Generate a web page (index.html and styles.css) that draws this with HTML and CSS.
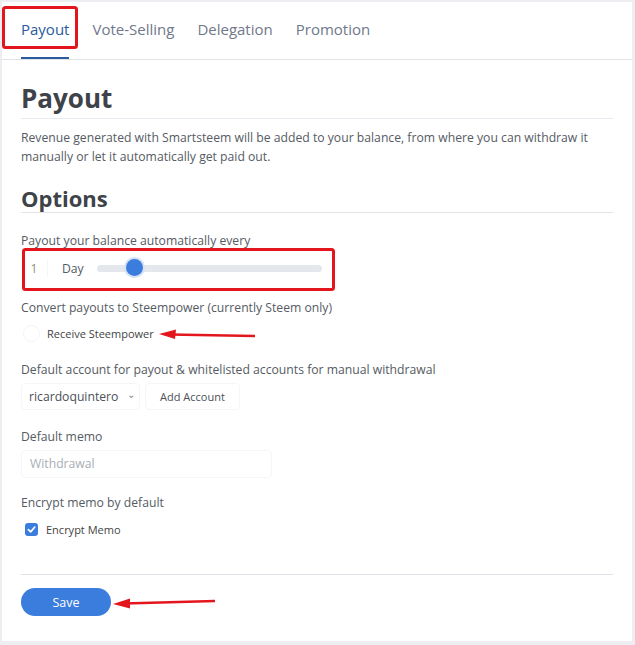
FILE: index.html
```html
<!DOCTYPE html>
<html>
  <head>
    <title>Smartsteem Settings</title>
    <meta charset="utf-8">
    <meta name="viewport" content="width=device-width, initial-scale=1">
    <link rel="stylesheet" href="styles.css">
  </head>
  <body>
    <div class="card">
      <nav class="tabs">
        <a class="tab active">Payout</a>
        <a class="tab">Vote-Selling</a>
        <a class="tab">Delegation</a>
        <a class="tab">Promotion</a>
      </nav>
      <div class="content">
        <h1>Payout</h1>
        <p class="intro">Revenue generated with Smartsteem will be added to your balance, from where you can withdraw it manually or let it automatically get paid out.</p>
        <h2>Options</h2>

        <div class="field first">
          <label>Payout your balance automatically every</label>
          <div class="slider-row">
            <span class="num">1</span>
            <span class="unit">Day</span>
            <div class="track"><span class="thumb"></span></div>
          </div>
        </div>

        <div class="field second">
          <label>Convert payouts to Steempower (currently Steem only)</label>
          <div class="check-row">
            <span class="radio"></span>
            <span class="small">Receive Steempower</span>
          </div>
        </div>

        <div class="field third">
          <label>Default account for payout &amp; whitelisted accounts for manual withdrawal</label>
          <div class="account-row">
            <div class="select">ricardoquintero <span class="chev">&#8964;</span></div>
            <div class="btn-light">Add Account</div>
          </div>
        </div>

        <div class="field">
          <label>Default memo</label>
          <div class="input">Withdrawal</div>
        </div>

        <div class="field last">
          <label>Encrypt memo by default</label>
          <div class="check-row checked">
            <span class="checkbox">
              <svg width="9" height="9" viewBox="0 0 10 10"><path d="M1.5 5.2 L4 7.6 L8.6 2.4" fill="none" stroke="#fff" stroke-width="1.8" stroke-linecap="round" stroke-linejoin="round"/></svg>
            </span>
            <span class="small">Encrypt Memo</span>
          </div>
        </div>

        <div class="footer">
          <button class="save">Save</button>
        </div>
      </div>
    </div>

    <!-- screenshot annotations -->
    <svg class="marks" width="635" height="645" viewBox="0 0 635 645">
      <rect x="3.5" y="7.5" width="73" height="40" rx="2" fill="none" stroke="#e3161d" stroke-width="3"/>
      <rect x="23.5" y="249.5" width="310" height="40" rx="2" fill="none" stroke="#e3161d" stroke-width="3"/>
      <line x1="255" y1="336" x2="170" y2="334.5" stroke="#e3161d" stroke-width="2.5"/>
      <polygon points="159,334 176,329.5 175,339" fill="#e3161d"/>
      <line x1="215" y1="601" x2="124" y2="603.5" stroke="#e3161d" stroke-width="2.5"/>
      <polygon points="113,604 130,598.5 130,608.5" fill="#e3161d"/>
    </svg>
  </body>
</html>
```

FILE: styles.css
```css
body {
  margin: 0;
  padding: 2px 3px 4px 2px;
  background: #eceef1;
  font-family: 'Open Sans', sans-serif;
  color: #555b63;
}

.card {
  background: #fff;
  height: 639px;
}

.tabs {
  display: flex;
  gap: 23px;
  padding-left: 19px;
  height: 57px;
  border-bottom: 1px solid #dfe3e8;
}

.tab {
  font-size: 15px;
  line-height: 54px;
  color: #70788a;
  border-bottom: 2px solid transparent;
}

.tab.active {
  color: #2b5a9e;
  border-bottom-color: #2b5a9e;
}

.content {
  padding: 0 19px 0 19px;
}

h1 {
  margin: 0;
  padding: 21px 0 3px;
  font-size: 26px;
  line-height: 34px;
  font-weight: 700;
  color: #3e4249;
  border-bottom: 1px solid #e7eaee;
}

.intro {
  margin: 9px 0 0;
  font-size: 12.2px;
  line-height: 19px;
}

h2 {
  margin: 18px 0 0;
  font-size: 22px;
  line-height: 28px;
  font-weight: 700;
  color: #3e4249;
  border-bottom: 1px solid #dfe3e8;
}

.field {
  margin-top: 18px;
}

.field.first {
  margin-top: 19px;
}

.field.second {
  margin-top: 19px;
}

.field.third {
  margin-top: 19px;
}

.field.last {
  margin-top: 16px;
}

.field label {
  display: block;
  font-size: 12.2px;
  line-height: 18px;
  margin-bottom: 7px;
}

.slider-row {
  display: flex;
  align-items: center;
  height: 24px;
  margin-top: -1px;
}

.num {
  width: 26px;
  text-align: center;
  font-size: 12.2px;
  color: #8b917a;
  border-right: 1px solid #f5f5f5;
}

.unit {
  margin-left: 14px;
  font-size: 12.2px;
  color: #555b63;
}

.track {
  position: relative;
  margin-left: 13px;
  width: 225px;
  height: 7px;
  border-radius: 4px;
  background: #e4e7eb;
}

.thumb {
  position: absolute;
  left: 29px;
  top: -6px;
  width: 17px;
  height: 17px;
  border-radius: 50%;
  background: #3b7ddd;
  box-shadow: 0 0 0 2px #d6e3f6;
}

.check-row {
  display: flex;
  align-items: center;
  height: 18px;
}

.radio {
  width: 15px;
  height: 15px;
  margin-left: 2px;
  border-radius: 50%;
  border: 1px solid #f5f5f5;
}

.small {
  margin-left: 7px;
  font-size: 11px;
  color: #444;
}

.checkbox {
  display: flex;
  align-items: center;
  justify-content: center;
  width: 13px;
  height: 13px;
  margin-left: 4px;
  border-radius: 3px;
  background: #3b7ddd;
}

.checked {
  margin-top: 8px;
}

.checked .small {
  margin-left: 8px;
}

.account-row {
  display: flex;
  gap: 5px;
  height: 27px;
  margin-top: -3px;
  margin-bottom: 1px;
}

.select,
.btn-light {
  display: flex;
  align-items: center;
  border: 1px solid #f6f6f6;
  border-radius: 4px;
  font-size: 12.2px;
  color: #4b5058;
}

.select {
  width: 110px;
  padding-left: 7px;
}

.chev {
  margin-left: 9px;
  font-size: 10px;
  color: #888;
  position: relative;
  top: -3px;
}

.btn-light {
  padding: 0 14px;
  font-size: 11px;
}

.input {
  width: 241px;
  height: 26px;
  line-height: 26px;
  padding-left: 8px;
  margin-top: -3px;
  border: 1px solid #f6f6f6;
  border-radius: 4px;
  font-size: 12.2px;
  color: #a9adb2;
}

.footer {
  margin-top: 36px;
  padding-top: 13px;
  border-top: 1px solid #dfe3e8;
}

.save {
  width: 90px;
  height: 28px;
  border: 0;
  border-radius: 14px;
  background: #3b7ddd;
  color: #fff;
  font-family: 'Open Sans', sans-serif;
  font-size: 12.5px;
  cursor: pointer;
}

.marks {
  position: absolute;
  top: 0;
  left: 0;
  pointer-events: none;
}
```
